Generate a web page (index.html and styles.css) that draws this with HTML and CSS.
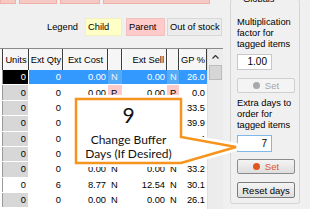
FILE: index.html
```html
<!DOCTYPE html>
<html>
<head>
<meta charset="utf-8">
<link rel="stylesheet" href="styles.css">
</head>
<body>
<div class="screen">
  <div class="left">
    <div class="strip">
      <span class="tile t1"></span><span class="tile t2"></span><span class="tile t3"></span><span class="tile t4"></span>
    </div>
    <div class="legend">
      <span class="legend-label">Legend</span>
      <span class="chip child">Child</span>
      <span class="chip parent">Parent</span>
      <span class="chip oos">Out of stock</span>
    </div>
    <div class="gridwrap">
      <div class="grid">
        <div class="row head">
          <div class="h"></div><div class="h">Units</div><div class="h">Ext Qty</div><div class="h">Ext Cost</div><div class="h"></div><div class="h hr">Ext Sell</div><div class="h"></div><div class="h">GP %</div>
        </div>
        <div class="row sel"><div class="rh"></div><div class="u cur">0</div><div>0</div><div>0.00</div><div class="f">N</div><div>0.00</div><div class="f">N</div><div>26.0</div></div>
        <div class="row"><div class="rh"></div><div class="u">0</div><div>0</div><div>0.00</div><div class="f p">P</div><div>0.00</div><div class="f p">P</div><div>0.0</div></div>
        <div class="row"><div class="rh"></div><div class="u">0</div><div>0</div><div></div><div class="f"></div><div></div><div class="f"></div><div>33.5</div></div>
        <div class="row"><div class="rh"></div><div class="u">0</div><div>0</div><div></div><div class="f"></div><div></div><div class="f"></div><div>39.9</div></div>
        <div class="row"><div class="rh"></div><div class="u">0</div><div>0</div><div></div><div class="f"></div><div></div><div class="f"></div><div>35.4</div></div>
        <div class="row"><div class="rh"></div><div class="u">0</div><div>0</div><div></div><div class="f"></div><div></div><div class="f"></div><div>26.5</div></div>
        <div class="row"><div class="rh"></div><div class="u">0</div><div>0</div><div>0.00</div><div class="f">N</div><div>0.00</div><div class="f">N</div><div>33.2</div></div>
        <div class="row"><div class="rh"></div><div class="u plain">0</div><div>6</div><div>8.77</div><div class="f">N</div><div>12.54</div><div class="f">N</div><div>30.1</div></div>
        <div class="row"><div class="rh"></div><div class="u">0</div><div>0</div><div>0.00</div><div class="f">N</div><div>0.00</div><div class="f">N</div><div>26.1</div></div>
      </div>
      <div class="scrollbar">
        <div class="sb-up"><svg width="7" height="4" viewBox="0 0 7 4"><path d="M0.5 3.5 L3.5 0.5 L6.5 3.5" fill="none" stroke="#333" stroke-width="1.2"/></svg></div>
        <div class="sb-thumb"></div>
      </div>
    </div>
  </div>
  <div class="right">
    <fieldset class="globals">
      <legend>Globals</legend>
      <div class="lbl">Multiplication factor for tagged items</div>
      <div class="input">1.00</div>
      <div class="btn disabled"><span class="dot"></span>Set</div>
      <div class="lbl lbl2">Extra days to order for tagged items</div>
      <div class="input focus">7</div>
      <div class="btn active"><span class="dot"></span>Set</div>
      <div class="btn reset">Reset days</div>
    </fieldset>
    <div class="nextbox"></div>
  </div>

  <div class="callout">
    <svg class="callout-shape" width="310" height="209" viewBox="0 0 310 209">
      <path d="M76 99 H181 V137 L236 147 L181 163 H76 Z" fill="#fff" stroke="#fff" stroke-width="8" stroke-linejoin="round"/>
      <path d="M76 99 H181 V137 L236 147 L181 163 H76 Z" fill="#fff" stroke="#f7941d" stroke-width="2.5" stroke-linejoin="miter"/>
    </svg>
    <div class="callout-text">
      <div class="num">9</div>
      <div class="desc">Change Buffer<br>Days (If Desired)</div>
    </div>
  </div>
</div>
</body>
</html>
```

FILE: styles.css
```css
html, body {
  margin: 0;
  padding: 0;
}
body {
  background: #f0f0f0;
  font-family: "Liberation Sans", Arial, sans-serif;
  font-size: 9.3px;
  color: #000;
}
.screen {
  position: relative;
  width: 310px;
  height: 209px;
  overflow: hidden;
  display: flex;
}
.left {
  width: 223px;
  flex: none;
  display: flex;
  flex-direction: column;
}
.strip {
  height: 4px;
  display: flex;
  gap: 3px;
}
.tile {
  background: #f7c9c4;
  height: 4px;
  border: 1px solid #f0b0aa;
  border-top: none;
  box-sizing: border-box;
}
.t1 { width: 16px; }
.t2 { width: 38px; }
.t3 { width: 40px; }
.t4 { width: 107px; }

.legend {
  margin-top: 14px;
  height: 18px;
  display: flex;
  align-items: stretch;
  white-space: nowrap;
}
.legend-label {
  margin-left: 47px;
  width: 38px;
  display: flex;
  align-items: center;
}
.chip {
  display: flex;
  align-items: center;
  padding-left: 2px;
  box-sizing: border-box;
  border: 1px solid #e2e2e2;
}
.child { width: 37px; background: #ffffc6; border-color: #f0f0c0; }
.parent { width: 39px; margin-left: 4px; background: #ffcaca; border-color: #f3c0c0; }
.oos { width: 55px; margin-left: 2px; background: #ececec; border-color: #d8d8d8; padding-left: 2px; }

.gridwrap {
  margin-top: 12px;
  flex: 1;
  display: flex;
  background: #fff;
  border-top: 1px solid #8a8a8a;
}
.grid {
  width: 207px;
  display: flex;
  flex-direction: column;
}
.row {
  display: grid;
  grid-template-columns: 3px 26px 34px 45px 14px 45px 12px 28px;
  height: 15.375px;
  box-sizing: border-box;
  border-bottom: 1px solid #fff;
}
.row > div {
  padding: 0 2px 0 0;
  text-align: right;
  white-space: nowrap;
  overflow: hidden;
  display: flex;
  align-items: center;
  justify-content: flex-end;
}
.row.head {
  height: 21px;
  border-bottom: none;
  background: #f6f6f6;
}
.row.head > .h {
  padding: 0;
  justify-content: center;
  border-right: 1px solid #3c3c3c;
  border-left: 1px solid #fff;
}
.row.head > .h:first-child { border-left: none; }
.row.head > .hr { justify-content: flex-end; padding-right: 2px; }
.row > .rh {
  padding: 0;
  background: #fff;
  border-right: 1px solid #9a9a9a;
}
.row > .u {
  background: #d7d7d7;
  border-right: 1px solid #fff;
}
.row > .u.plain { background: #fff; }
.row > .f {
  justify-content: flex-start;
  padding: 0 0 0 3px;
}
.row > .p { background: #ffcaca; }
.row.sel > div {
  background: #3399ff;
  color: #fff;
}
.row.sel > .rh { background: #fff; }
.row.sel > .cur {
  background: #000;
  color: #fff;
}
.row.sel > .f { background: #55aaf5; color: #e8f4ff; }

.scrollbar {
  width: 15px;
  flex: none;
  background: #ececec;
  border-left: 1px solid #e0e0e0;
  display: flex;
  flex-direction: column;
}
.sb-up {
  height: 16px;
  display: flex;
  align-items: center;
  justify-content: center;
}
.sb-thumb {
  height: 15px;
  margin: 0 1px;
  background: #d6d6d6;
  border: 1px solid #bcbcbc;
  box-sizing: border-box;
}

.right {
  flex: 1;
  display: flex;
  flex-direction: column;
}
.globals {
  margin: -6px 0 0 7px;
  width: 70px;
  box-sizing: border-box;
  border: 1px solid #d5d5d5;
  border-radius: 3px;
  padding: 13px 0 5px 6px;
  min-width: 0;
  display: flex;
  flex-direction: column;
  align-items: flex-start;
}
.globals legend {
  padding: 0 2px;
  margin-left: 4px;
  font-size: 9.3px;
  line-height: 10px;
}
.lbl {
  width: 62px;
  line-height: 11px;
}
.lbl2 { margin-top: 5px; }
.input {
  margin-top: 4px;
  width: 35px;
  height: 16px;
  box-sizing: border-box;
  background: #fff;
  border: 1px solid #c8c8c8;
  text-align: right;
  padding-right: 4px;
  line-height: 14px;
  font-size: 10px;
}
.input.focus {
  height: 17px;
  border-color: #80b8e8;
  line-height: 15px;
}
.btn {
  width: 58px;
  height: 15px;
  box-sizing: border-box;
  border: 1px solid #a8a8a8;
  border-radius: 2px;
  background: linear-gradient(#f4f4f4, #dedede);
  display: flex;
  align-items: center;
  justify-content: center;
  gap: 5px;
  font-size: 9.5px;
}
.btn .dot {
  width: 7px;
  height: 7px;
  border-radius: 50%;
}
.disabled {
  margin-top: 8px;
  background: #f4f4f4;
  border-color: #cfcfcf;
  color: #a6a6a6;
}
.disabled .dot { background: #a9a9a9; }
.active {
  margin-top: 7px;
  border-color: #8c8c8c;
  color: #e2541f;
}
.active .dot { background: #e2541f; }
.reset {
  margin-top: 8px;
  border-color: #7c7c7c;
  height: 16px;
}
.nextbox {
  margin: 5px 0 0 12px;
  width: 63px;
  height: 10px;
  border: 1px solid #b9b9b9;
  border-bottom: none;
  border-radius: 2px 2px 0 0;
}

.callout {
  position: absolute;
  left: 0;
  top: 0;
  width: 310px;
  height: 209px;
  pointer-events: none;
}
.callout-shape {
  position: absolute;
  left: 0;
  top: 0;
}
.callout-text {
  position: absolute;
  left: 77px;
  top: 104px;
  width: 103px;
  text-align: center;
  font-family: Lato, "Open Sans", sans-serif;
  color: #111;
}
.callout-text .num {
  font-size: 21px;
  line-height: 22px;
}
.callout-text .desc {
  margin-top: 7px;
  font-size: 12px;
  line-height: 14px;
}
```
